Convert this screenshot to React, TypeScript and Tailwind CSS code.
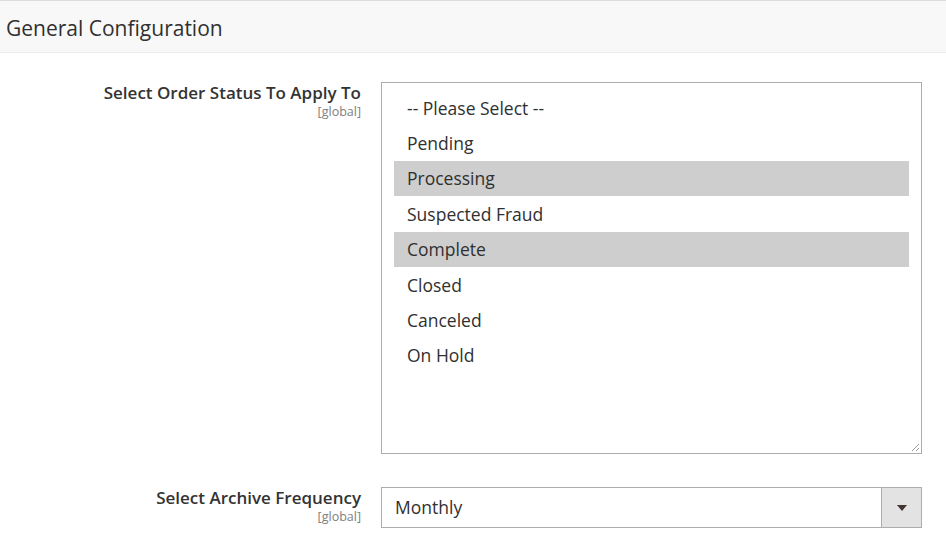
import React from "react";

const options = [
  { label: "-- Please Select --", selected: false },
  { label: "Pending", selected: false },
  { label: "Processing", selected: true },
  { label: "Suspected Fraud", selected: false },
  { label: "Complete", selected: true },
  { label: "Closed", selected: false },
  { label: "Canceled", selected: false },
  { label: "On Hold", selected: false },
];

export default function App() {
  return (
    <div className="w-[946px] h-[543px] bg-white overflow-hidden text-[#303030]" style={{ fontFamily: '"Open Sans", sans-serif' }}>
      <div className="h-[53px] bg-[#f8f8f8] border-t border-b border-t-[#dcdcdc] border-b-[#ececec] flex items-center pl-[6px] pt-[3px]">
        <span className="text-[21px] leading-[26px] text-[#303030]">General Configuration</span>
      </div>
      <div className="flex pt-[29px]">
        <div className="w-[363px] pr-[2px] flex flex-col items-end pt-[1px]">
          <span className="text-[17px] font-semibold leading-[20px] text-[#333333]">Select Order Status To Apply To</span>
          <span className="text-[12.5px] leading-[14px] mt-[2px] text-[#808080]">[global]</span>
        </div>
        <div className="ml-[18px] w-[541px] h-[372px] border border-[#adadad] relative pt-[7px] px-[12px]">
          {options.map((o) => (
            <div
              key={o.label}
              className={`h-[35.4px] flex items-center pl-[13px] text-[17.5px] ${o.selected ? "bg-[#cecece]" : ""}`}
            >
              {o.label}
            </div>
          ))}
          <svg className="absolute right-[1px] bottom-[1px]" width="9" height="9" viewBox="0 0 9 9">
            <line x1="8" y1="1" x2="1" y2="8" stroke="#9a9a9a" strokeWidth="1" />
            <line x1="8" y1="5" x2="5" y2="8" stroke="#9a9a9a" strokeWidth="1" />
          </svg>
        </div>
      </div>
      <div className="flex pt-[33px]">
        <div className="w-[363px] pr-[2px] flex flex-col items-end pt-[1px]">
          <span className="text-[17px] font-semibold leading-[20px] text-[#333333]">Select Archive Frequency</span>
          <span className="text-[12.5px] leading-[14px] mt-[2px] text-[#808080]">[global]</span>
        </div>
        <div className="ml-[18px] w-[541px] h-[41px] border border-[#adadad] flex">
          <div className="flex-1 flex items-center pl-[13px] text-[17.5px]">Monthly</div>
          <div className="w-[40px] bg-[#e3e3e3] border-l border-[#adadad] flex items-center justify-center">
            <svg width="10" height="6" viewBox="0 0 10 6">
              <polygon points="0,0 10,0 5,6" fill="#41362f" />
            </svg>
          </div>
        </div>
      </div>
    </div>
  );
}
